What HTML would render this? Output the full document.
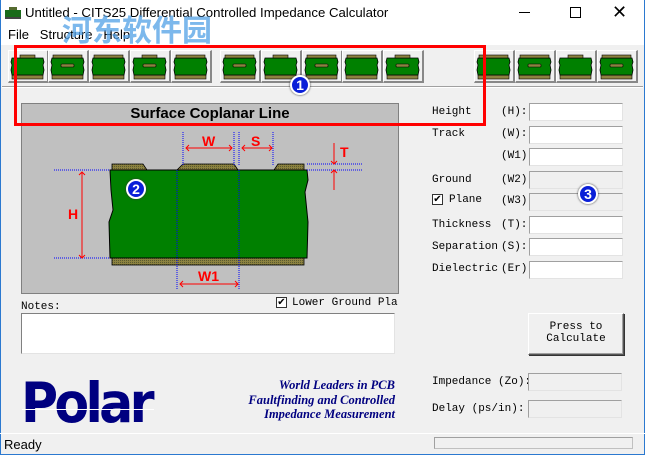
<!DOCTYPE html>
<html><head><meta charset="utf-8"><style>
*{margin:0;padding:0;box-sizing:border-box}
body{width:645px;height:455px;overflow:hidden;background:#f0f0f0;position:relative;font-family:"Liberation Sans",sans-serif}
.a{position:absolute}
.mono{font-family:"Liberation Mono","DejaVu Sans Mono",monospace;font-size:11px;color:#000}
.inp{position:absolute;left:529px;width:94px;height:18px;background:#fff;border-top:1px solid #a0a0a0;border-left:1px solid #a0a0a0;border-bottom:1px solid #e3e3e3;border-right:1px solid #e3e3e3}
.inp.d{background:#f0f0f0}
.btn{position:absolute;top:50px;width:41px;height:33px;background:#f0f0f0;border-top:1px solid #fff;border-left:1px solid #fff;border-right:2px solid #888;border-bottom:2px solid #888}
.circ{position:absolute;width:20px;height:20px;border-radius:50%;background:#0a1fd8;border:2px solid #fff;box-shadow:0 0 2px #333;color:#fff;font-size:14px;font-weight:bold;text-align:center;line-height:16px}
</style></head><body>
<div class="a" style="left:0;top:0;width:645px;height:45px;background:#fff"></div>
<div class="a" style="left:0;top:0;width:1px;height:455px;background:#2b79d0"></div>
<div class="a" style="right:0;top:0;width:1px;height:455px;background:#2b79d0"></div>
<div class="a" style="left:0;bottom:0;width:645px;height:1px;background:#2b79d0"></div>
<svg class="a" style="left:5px;top:7px" width="16" height="12"><rect x="4" y="0" width="8" height="3" fill="#556b2f"/><rect x="0" y="3" width="16" height="7" fill="#1a6b1a"/><rect x="0" y="10" width="16" height="2" fill="#444"/></svg>
<div class="a" style="left:25px;top:5px;font-size:13.2px;color:#000">Untitled - CITS25 Differential Controlled Impedance Calculator</div>
<div class="a" style="left:519px;top:12px;width:11px;height:1px;background:#000"></div>
<div class="a" style="left:570px;top:7px;width:11px;height:11px;border:1px solid #000"></div>
<div class="a" style="left:612px;top:2px;font-size:18px;color:#000">✕</div>
<div class="a" style="left:8px;top:27px;font-size:13px;color:#000">File&nbsp;&nbsp;&nbsp;Structure&nbsp;&nbsp;&nbsp;Help</div>
<div class="a" style="left:62px;top:6px;font-size:30px;font-weight:bold;color:rgba(80,160,230,.75);font-family:'Noto Sans CJK SC',sans-serif">河东软件园</div>
<div class="a" style="left:2px;top:86px;width:641px;height:2px;border-top:1px solid #a0a0a0;border-bottom:1px solid #fff"></div>
<div id="tb"></div>
<div class="a" style="left:21px;top:103px;width:378px;height:191px;background:#c0c0c0;border:1px solid #808080"></div>
<div class="a" style="left:22px;top:104px;width:376px;height:21px;border-bottom:1px solid #808080;font-size:15px;font-weight:bold;text-align:center;line-height:19px;color:#000">Surface Coplanar Line</div>
<svg class="a" style="left:0;top:0" width="645" height="455">
<defs><pattern id="h" width="2" height="2" patternUnits="userSpaceOnUse"><rect width="2" height="2" fill="#8c8240"/><rect width="1" height="1" fill="#5a5a30"/></pattern></defs>
<path d="M112 164h31l4 6h-35z" fill="url(#h)" stroke="#000" stroke-width=".8"/>
<path d="M183 164h51l4 6h-61z" fill="url(#h)" stroke="#000" stroke-width=".8"/>
<path d="M278 164h26v6h-30z" fill="url(#h)" stroke="#000" stroke-width=".8"/>
<path d="M110 170h197l1 10-3 12 3 30-1 36H110l-1-36 4-12-2-20z" fill="#008000" stroke="#000" stroke-width="1"/>
<rect x="112" y="258" width="192" height="7" fill="url(#h)" stroke="#000" stroke-width=".8"/>
<g stroke="#0000ff" stroke-dasharray="1,1" stroke-width="1">
<path d="M54 170h56M54 258h56M307 164h56M307 170h56M183 132v33M234 132v33M239 132v33M273 132v33M177 170v120M239 170v120"/></g>
<g stroke="#f00" stroke-width="1" fill="none"><path d="M82 172v86M79 175l3-3 3 3M79 255l3 3 3-3M186 148h46M189 145l-3 3 3 3M229 145l3 3-3 3M242 148h30M245 145l-3 3 3 3M269 145l3 3-3 3M334 143v21M331 161l3 3 3-3M334 170v20M331 173l3-3 3 3M180 284h58M183 281l-3 3 3 3M235 281l3 3-3 3"/></g>
<g fill="#f00" font-weight="bold" font-size="14" font-family="Liberation Sans"><text x="202" y="146">W</text><text x="251" y="146">S</text><text x="340" y="157">T</text><text x="68" y="219">H</text><text x="198" y="281">W1</text></g>
</svg>
<div class="a mono" style="left:21px;top:301px">Notes:</div>
<div class="a" style="left:276px;top:297px;width:11px;height:11px;background:#fff;border:1px solid #333;font-size:10px;line-height:9px;text-align:center">✔</div>
<div class="a mono" style="left:292px;top:297px;width:106px;overflow:hidden;white-space:nowrap">Lower Ground Plane</div>
<div class="a" style="left:21px;top:313px;width:374px;height:41px;background:#fff;border-top:1px solid #808080;border-left:1px solid #808080;border-bottom:1px solid #e3e3e3;border-right:1px solid #e3e3e3"></div>
<div class="a" style="left:21px;top:371px;font-size:55px;font-weight:900;color:#000080;letter-spacing:-4px;font-family:'DejaVu Sans',sans-serif;transform:scaleX(0.92);transform-origin:left">Polar</div>
<div class="a" style="left:22px;top:409px;width:132px;height:1px;background:#fff"></div>
<div class="a" style="left:200px;top:378px;width:195px;text-align:right;font-family:'Liberation Serif',serif;font-style:italic;font-weight:bold;font-size:12.5px;color:#000080;line-height:14.5px">World Leaders in PCB<br>Faultfinding and Controlled<br>Impedance Measurement</div>
<div class="a mono" style="left:432px;top:106px">Height</div><div class="a mono" style="left:501px;top:106px">(H):</div><div class="inp" style="top:103px"></div>
<div class="a mono" style="left:432px;top:128px">Track</div><div class="a mono" style="left:501px;top:128px">(W):</div><div class="inp" style="top:126px"></div>
<div class="a mono" style="left:501px;top:150px">(W1):</div><div class="inp" style="top:148px"></div>
<div class="a mono" style="left:432px;top:174px">Ground</div><div class="a mono" style="left:501px;top:174px">(W2):</div><div class="inp d" style="top:171px"></div>
<div class="a" style="left:432px;top:194px;width:11px;height:11px;background:#fff;border:1px solid #333;font-size:10px;line-height:9px;text-align:center">✔</div>
<div class="a mono" style="left:449px;top:194px">Plane</div><div class="a mono" style="left:501px;top:195px">(W3):</div><div class="inp d" style="top:193px"></div>
<div class="a mono" style="left:432px;top:219px">Thickness</div><div class="a mono" style="left:501px;top:219px">(T):</div><div class="inp" style="top:216px"></div>
<div class="a mono" style="left:432px;top:241px;width:66px;overflow:hidden;white-space:nowrap">Separation</div><div class="a mono" style="left:501px;top:241px">(S):</div><div class="inp" style="top:238px"></div>
<div class="a mono" style="left:432px;top:263px;width:66px;overflow:hidden;white-space:nowrap">Dielectric</div><div class="a mono" style="left:501px;top:263px">(Er):</div><div class="inp" style="top:261px"></div>
<div class="a mono" style="left:528px;top:313px;width:96px;height:42px;border:1px solid #555;border-top-color:#fff;border-left-color:#fff;box-shadow:1px 1px 0 #333,inset -1px -1px 0 #a0a0a0;text-align:center;line-height:12px;padding-top:7px">Press to<br>Calculate</div>
<div class="a mono" style="left:432px;top:376px">Impedance (Zo):</div><div class="inp d" style="top:373px;left:528px"></div>
<div class="a mono" style="left:432px;top:403px">Delay (ps/in):</div><div class="inp d" style="top:400px;left:528px"></div>
<div class="a" style="left:0;top:433px;width:645px;height:1px;background:#fff"></div>
<div class="a" style="left:4px;top:437px;font-size:13px;color:#000">Ready</div>
<div class="a" style="left:434px;top:437px;width:199px;height:12px;border:1px solid #c0c0c0;border-top-color:#a0a0a0;border-left-color:#a0a0a0"></div>
<div class="a" style="left:14px;top:45px;width:472px;height:81px;border:3px solid #f00"></div>
<div class="circ" style="left:290px;top:75px">1</div>
<div class="circ" style="left:126px;top:179px">2</div>
<div class="circ" style="left:578px;top:184px">3</div>
<script>
var xs=[8,48,89,130,171,220,261,302,342,383,474,515,556,597],h='';
xs.forEach(function(x,i){h+='<div class="btn" style="left:'+x+'px"><svg width="38" height="30"><rect x="3" y="24" width="31" height="4" fill="#8c8240" stroke="#000" stroke-width=".6"/><path d="M3 7h31l1 4-1 3 1 5-1 5H3l-1-5 1-5-1-3z" fill="#008000" stroke="#000" stroke-width=".8"/>'+(i%3==0?'<rect x="11" y="4" width="15" height="3" fill="#8c8240" stroke="#000" stroke-width=".6"/>':'<rect x="4" y="4" width="29" height="3" fill="#8c8240" stroke="#000" stroke-width=".6"/>')+(i%2?'<rect x="12" y="13" width="13" height="3" rx="1" fill="#8c8240" stroke="#000" stroke-width=".6"/>':'')+'</svg></div>'});
document.getElementById('tb').innerHTML=h;
</script>
</body></html>
